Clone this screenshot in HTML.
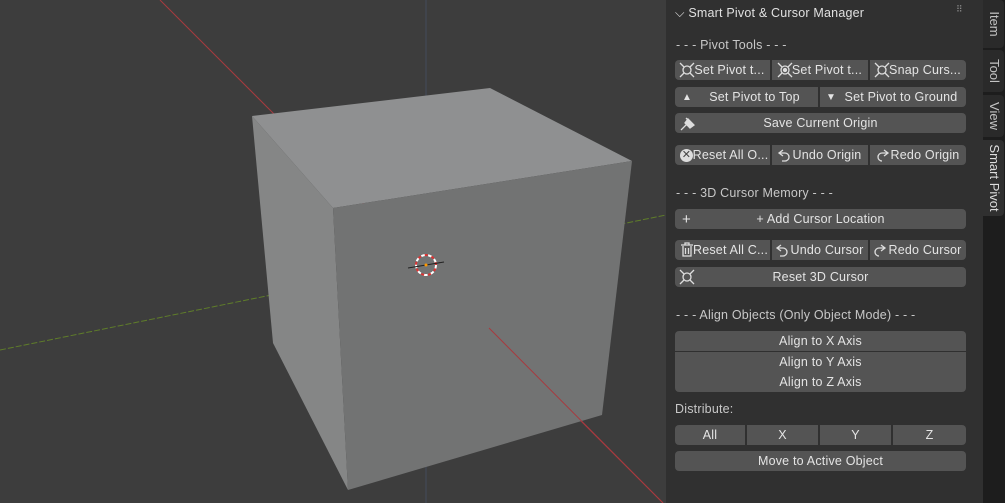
<!DOCTYPE html><html><head><style>
body{margin:0;width:1005px;height:503px;overflow:hidden;background:#3d3d3d;font-family:"Liberation Sans",sans-serif;position:relative}
#vp{position:absolute;left:0;top:0}
#panel{position:absolute;left:666px;top:0;width:317px;height:503px;background:#303030}
#tabs{position:absolute;left:983px;top:0;width:22px;height:503px;background:#1d1d1d}
.tab{position:absolute;left:0;width:21px;background:#2a2a2a;border-radius:0 4px 4px 0;color:#c4c4c4;font-size:13px}
.tab span{position:absolute;left:4px;top:50%;white-space:nowrap;writing-mode:vertical-rl;transform:translateY(-50%)}
.t{position:absolute;color:#c8c8c8;font-size:12.5px;white-space:nowrap;letter-spacing:0.2px}
.b{position:absolute;background:#545454;color:#e4e4e4;font-size:12.5px;display:flex;align-items:center;justify-content:center;box-sizing:border-box;white-space:nowrap;height:20px;letter-spacing:0.2px}
</style></head><body>
<svg id="vp" width="1005" height="503">
<line x1="426" y1="0" x2="426" y2="503" stroke="#444b5a" stroke-width="1"/>
<line x1="160" y1="0" x2="663" y2="503" stroke="#a83a3f" stroke-width="1"/>
<line x1="0" y1="350" x2="666" y2="215" stroke="#5f7d2a" stroke-width="1" stroke-dasharray="6 2"/>
<polygon points="252,116 490,88 632,161 333,208" fill="#8f9091"/>
<polygon points="252,116 333,208 348,490 273,343" fill="#858686"/>
<polygon points="333,208 632,161 602,415 348,490" fill="#727373"/>
<line x1="489" y1="328" x2="663" y2="503" stroke="#a83a3f" stroke-width="1"/>
<circle cx="426" cy="265" r="10" fill="none" stroke="#fff" stroke-width="2" stroke-dasharray="4 3"/>
<circle cx="426" cy="265" r="10" fill="none" stroke="#d33" stroke-width="2" stroke-dasharray="3 4" stroke-dashoffset="3.5"/>
<line x1="408" y1="268" x2="444" y2="262" stroke="#222" stroke-width="1"/>
<circle cx="426" cy="265" r="1.5" fill="#f90"/>
</svg>
<div id="panel">
<div class="t" style="left:9px;top:6px;color:#e0e0e0;font-size:12.5px">⌵ Smart Pivot &amp; Cursor Manager</div>
<div class="t" style="left:290px;top:4px;color:#888;font-size:9px">⠿</div>
<div class="t" style="left:10px;top:38px">- - - Pivot Tools - - -</div>
<div class="t" style="left:10px;top:186px">- - - 3D Cursor Memory - - -</div>
<div class="t" style="left:10px;top:308px">- - - Align Objects (Only Object Mode) - - -</div>
<div class="t" style="left:9px;top:402px">Distribute:</div>
</div>
<div class="b" style="left:675px;top:60px;width:95px;border-radius:4px 0 0 4px;padding-left:14px">Set Pivot t...</div>
<div class="b" style="left:772px;top:60px;width:96px;padding-left:14px">Set Pivot t...</div>
<div class="b" style="left:870px;top:60px;width:96px;border-radius:0 4px 4px 0;padding-left:14px">Snap Curs...</div>
<div class="b" style="left:675px;top:87px;width:143px;border-radius:4px 0 0 4px;padding-left:16px"><span style="position:absolute;left:7px;font-size:10px">▲</span>Set Pivot to Top</div>
<div class="b" style="left:820px;top:87px;width:146px;border-radius:0 4px 4px 0;padding-left:16px"><span style="position:absolute;left:6px;font-size:10px">▼</span>Set Pivot to Ground</div>
<div class="b" style="left:675px;top:113px;width:291px;border-radius:4px">Save Current Origin</div>
<div class="b" style="left:675px;top:145px;width:95px;border-radius:4px 0 0 4px;padding-left:16px"><span style="position:absolute;left:5px;width:13px;height:13px;border-radius:50%;background:#ddd;color:#444;font-size:11px;line-height:13px;text-align:center">✕</span>Reset All O...</div>
<div class="b" style="left:772px;top:145px;width:96px;padding-left:14px">Undo Origin</div>
<div class="b" style="left:870px;top:145px;width:96px;border-radius:0 4px 4px 0;padding-left:14px">Redo Origin</div>
<div class="b" style="left:675px;top:209px;width:291px;border-radius:4px"><span style="position:absolute;left:7px;font-size:15px">+</span>+ Add Cursor Location</div>
<div class="b" style="left:675px;top:240px;width:95px;border-radius:4px 0 0 4px;padding-left:16px">Reset All C...</div>
<div class="b" style="left:772px;top:240px;width:96px;padding-left:14px">Undo Cursor</div>
<div class="b" style="left:870px;top:240px;width:96px;border-radius:0 4px 4px 0;padding-left:14px">Redo Cursor</div>
<div class="b" style="left:675px;top:267px;width:291px;border-radius:4px">Reset 3D Cursor</div>
<div class="b" style="left:675px;top:331px;width:291px;border-radius:4px 4px 0 0">Align to X Axis</div>
<div class="b" style="left:675px;top:352px;width:291px">Align to Y Axis</div>
<div class="b" style="left:675px;top:372px;width:291px;border-radius:0 0 4px 4px">Align to Z Axis</div>
<div class="b" style="left:675px;top:425px;width:70px;border-radius:4px 0 0 4px">All</div>
<div class="b" style="left:747px;top:425px;width:71px">X</div>
<div class="b" style="left:820px;top:425px;width:71px">Y</div>
<div class="b" style="left:893px;top:425px;width:73px;border-radius:0 4px 4px 0">Z</div>
<div class="b" style="left:675px;top:451px;width:291px;border-radius:4px">Move to Active Object</div>
<svg style="position:absolute;left:0;top:0" width="1005" height="503" fill="none" stroke="#ddd" stroke-width="1.3">
<circle cx="687" cy="70" r="4"/><path d="M680 63l4 4M694 63l-4 4M680 77l4-4M694 77l-4-4"/>
<circle cx="785" cy="70" r="4"/><path d="M778 63l4 4M792 63l-4 4M778 77l4-4M792 77l-4-4"/><circle cx="785" cy="70" r="1.5" fill="#ddd"/>
<circle cx="882" cy="70" r="4"/><path d="M875 63l4 4M889 63l-4 4M875 77l4-4M889 77l-4-4"/>
<circle cx="687" cy="277" r="4"/><path d="M680 270l4 4M694 270l-4 4M680 284l4-4M694 284l-4-4"/>
<path d="M681 130l6-6M686 118l7 7M688 119l-3 4 5 5 4-3z" fill="#ddd"/>
<path d="M783 150l-4 3 4 3M779 153h6a4 4 0 0 1 0 8h-3"/>
<path d="M884 150l4 3-4 3M888 153h-6a4 4 0 0 0 0 8"/>
<path d="M881 245l4 3-4 3M885 248h-6a4 4 0 0 0 0 8"/>
<path d="M781 245l-4 3 4 3M777 248h6a4 4 0 0 1 0 8h-3"/>
<path d="M681 245h12M685 245v-2h4v2M683 246v10h8v-10M685.5 248v6M688.5 248v6"/>
</svg>
<div id="tabs">
<div class="tab" style="top:0;height:48px"><span>Item</span></div>
<div class="tab" style="top:50px;height:42px"><span>Tool</span></div>
<div class="tab" style="top:95px;height:42px"><span>View</span></div>
<div class="tab" style="top:140px;height:76px;background:#303030;color:#ddd"><span>Smart Pivot</span></div>
</div>
</body></html>
